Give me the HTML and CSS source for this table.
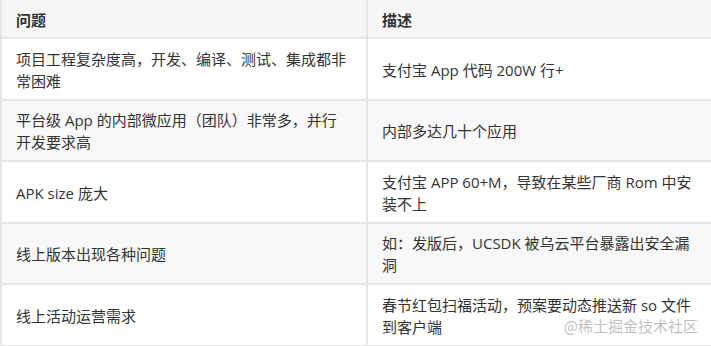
FILE: index.html
```html
<!DOCTYPE html>
<html lang="zh-CN">
<head>
<meta charset="utf-8">
<title>问题与描述</title>
<link rel="stylesheet" href="styles.css">
</head>
<body>
<div class="wrap">
  <table class="grid">
    <colgroup>
      <col class="c1">
      <col class="c2">
    </colgroup>
    <thead>
      <tr><th>问题</th><th>描述</th></tr>
    </thead>
    <tbody>
      <tr><td>项目工程复杂度高，开发、编译、测试、集成都非常困难</td><td>支付宝 App 代码 200W 行+</td></tr>
      <tr class="alt"><td>平台级 App 的内部微应用（团队）非常多，并行开发要求高</td><td>内部多达几十个应用</td></tr>
      <tr><td>APK size 庞大</td><td>支付宝 APP 60+M，导致在某些厂商 Rom 中安装不上</td></tr>
      <tr class="alt"><td>线上版本出现各种问题</td><td>如：发版后，UCSDK 被乌云平台暴露出安全漏洞</td></tr>
      <tr><td>线上活动运营需求</td><td>春节红包扫福活动，预案要动态推送新 so 文件到客户端</td></tr>
    </tbody>
  </table>
  <div class="mark">@稀土掘金技术社区</div>
</div>
</body>
</html>
```
FILE: styles.css
```css
html, body {
  margin: 0;
  padding: 0;
  background: #ffffff;
}
body {
  width: 711px;
  height: 346px;
  overflow: hidden;
  font-family: "Open Sans", "Noto Sans CJK SC", sans-serif;
  font-size: 15px;
  line-height: 22px;
  color: #333333;
}
.wrap {
  position: relative;
  width: 711px;
  height: 346px;
  overflow: hidden;
}
.grid {
  border-collapse: separate;
  border-spacing: 0;
  width: 740px;
  table-layout: fixed;
}
.c1 { width: 366px; }
.grid th,
.grid td {
  border-left: 2px solid #e6e6e6;
  border-bottom: 2px solid #e6e6e6;
  text-align: left;
  vertical-align: middle;
  padding: 2px 16px 0 14px;
}
.grid th {
  background: #f6f6f6;
  font-weight: 700;
  height: 35px;
}
.grid td {
  height: 57.5px;
  background: #ffffff;
}
.grid tr.alt td {
  background: #f8f8f8;
}
.grid td + td,
.grid th + th {
  padding-right: 40px;
}
.mark {
  position: absolute;
  right: 13px;
  bottom: 9px;
  font-family: "Noto Sans CJK SC", sans-serif;
  font-size: 15px;
  line-height: 22px;
  color: rgba(170, 170, 170, 0.75);
}
```
